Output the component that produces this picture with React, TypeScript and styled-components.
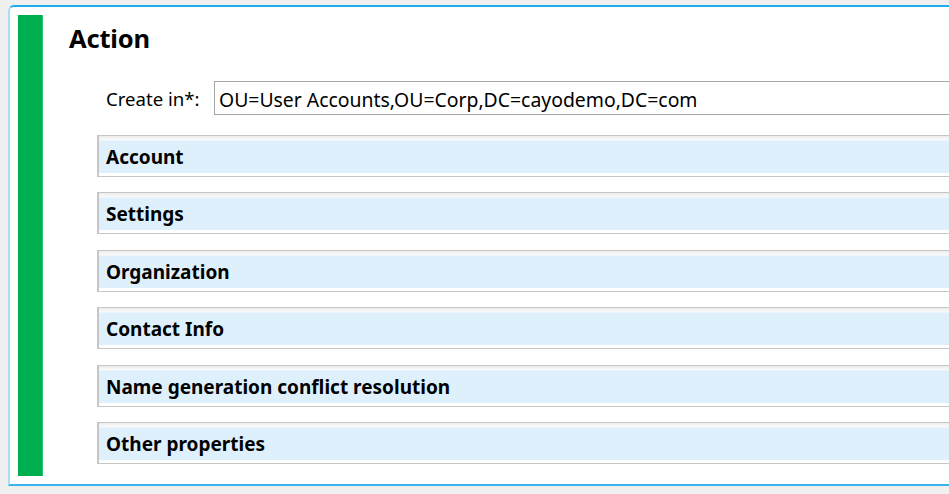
import styled, { createGlobalStyle } from 'styled-components'

const GlobalStyle = createGlobalStyle`
  html, body {
    margin: 0;
    padding: 0;
    background: #f0f0f0;
  }

  body {
    font-family: 'Noto Sans', 'Open Sans', 'Liberation Sans', sans-serif;
    color: #000;
  }

  * {
    box-sizing: border-box;
  }
`

const Page = styled.div`
  width: 949px;
  height: 494px;
  padding: 5px 0 8px 8px;
  overflow: hidden;
  background: #f0f0f0;
`

const Panel = styled.div`
  display: flex;
  width: 1200px;
  height: 481px;
  padding: 8px;
  background: #fff;
  border-top: 2px solid #1aaeef;
  border-left: 2px solid #a9dcf5;
  border-bottom: 2px solid #38b5ee;
  border-top-left-radius: 6px;
`

const StatusBar = styled.div`
  flex-shrink: 0;
  width: 25px;
  background: #00b050;
  border-right: 1px solid #2fc070;
`

const Body = styled.div`
  flex: 1;
  display: flex;
  flex-direction: column;
  padding-left: 26px;
`

const Title = styled.h1`
  margin: 0;
  padding-top: 6px;
  font-size: 25.5px;
  line-height: 34px;
  font-weight: 700;
  letter-spacing: -0.2px;
`

const Form = styled.div`
  display: flex;
  flex-direction: column;
  padding-left: 28px;
  margin-top: 26px;
`

const Field = styled.div`
  display: flex;
  align-items: center;
  padding-left: 9px;
  margin-bottom: 20px;
`

const Label = styled.label`
  width: 108px;
  padding-top: 1px;
  font-size: 18.6px;
`

const Input = styled.div`
  flex: 1;
  height: 34px;
  display: flex;
  align-items: center;
  padding: 2px 0 0 4px;
  font-size: 19.4px;
  border: 1px solid #a6a6a6;
  border-right: none;
  background: #fff;
`

const Section = styled.div`
  height: 42px;
  margin-bottom: 15.4px;
  display: flex;
  align-items: center;
  padding: 2px 0 0 7px;
  border: 1px solid #c6c6c6;
  border-right: none;
  border-left-width: 2px;
  background: linear-gradient(
    #ececec 0,
    #fafafa 4px,
    #dff0fd 5px,
    #dff0fd calc(100% - 3px),
    #ffffff calc(100% - 3px)
  );
  font-size: 19px;
  font-weight: 700;
`

const sections = [
  'Account',
  'Settings',
  'Organization',
  'Contact Info',
  'Name generation conflict resolution',
  'Other properties',
]

export default function App() {
  return (
    <>
      <GlobalStyle />
      <Page>
        <Panel>
          <StatusBar />
          <Body>
            <Title>Action</Title>
            <Form>
              <Field>
                <Label>Create in*:</Label>
                <Input>OU=User Accounts,OU=Corp,DC=cayodemo,DC=com</Input>
              </Field>
              {sections.map((name) => (
                <Section key={name}>{name}</Section>
              ))}
            </Form>
          </Body>
        </Panel>
      </Page>
    </>
  )
}
